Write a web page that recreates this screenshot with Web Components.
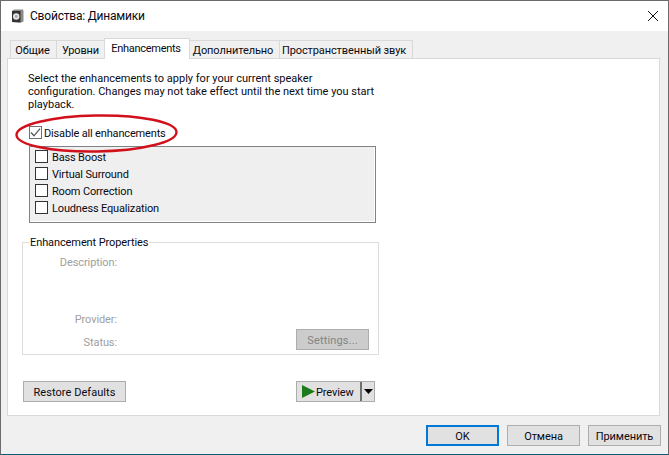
<!DOCTYPE html>
<html>
<head>
<meta charset="utf-8">
<title>Свойства: Динамики</title>
<style>
html,body{margin:0;padding:0;background:#f0f0f0;}
body{font:11px Roboto,sans-serif;color:#000;}
</style>
</head>
<body>
<sound-dialog>
	<title-bar slot="title">Свойства: Динамики</title-bar>
	<tab-strip slot="tabs">
		<tab-item style="width:47px;padding-right:2px">Общие</tab-item>
		<tab-item style="width:49px">Уровни</tab-item>
		<tab-item active style="width:86px;padding-right:2px;letter-spacing:-0.3px">Enhancements</tab-item>
		<tab-item style="width:91px;padding-right:3px">Дополнительно</tab-item>
		<tab-item style="width:134px;padding-right:4px">Пространственный звук</tab-item>
	</tab-strip>
	<enh-panel slot="panel"></enh-panel>
	<win-button slot="footer" default>OK</win-button>
	<win-button slot="footer">Отмена</win-button>
	<win-button slot="footer">Применить</win-button>
</sound-dialog>

<script>
const FONT = `font-family:Roboto,sans-serif;font-size:11px;letter-spacing:-0.1px;color:#0a0a14;`;

class SoundDialog extends HTMLElement{
	constructor(){
		super();
		this.attachShadow({mode:'open'}).innerHTML = `
		<style>
			:host{display:flex;flex-direction:column;box-sizing:border-box;width:669px;height:455px;background:#f0f0f0;
				border:1px solid #6b6b6b;border-bottom-color:#0d5a78;${FONT}}
			.tabs{display:block;height:27px;padding-left:9px;}
			.panel{display:block;margin-left:6px;}
			.footer{display:flex;justify-content:flex-end;gap:8px;margin:9px 7px 0 0;}
		</style>
		<slot name="title"></slot>
		<div class="tabs"><slot name="tabs"></slot></div>
		<div class="panel"><slot name="panel"></slot></div>
		<div class="footer"><slot name="footer"></slot></div>`;
	}
}

class TitleBar extends HTMLElement{
	constructor(){
		super();
		this.attachShadow({mode:'open'}).innerHTML = `
		<style>
			:host{display:flex;align-items:center;height:30px;background:#fff;flex:none;}
			svg.icon{margin-left:10px;width:13px;height:14px;flex:none;}
			span{margin-left:6px;font-size:12px;letter-spacing:-0.2px;flex:1;}
			svg.close{width:10px;height:10px;margin-right:10px;flex:none;}
		</style>
		<svg class="icon" viewBox="0 0 13 14">
			<path d="M1 2 3 0.5 12 0.5 12.5 2 12.5 12.5 10 13.5 1 13Z" fill="#8a8a8a"/>
			<path d="M1 2 9.5 2 9.5 13.5 1 13Z" fill="#333"/>
			<circle cx="5.2" cy="7.5" r="3.2" fill="#e4e4e4"/>
			<circle cx="5.2" cy="7.5" r="1.4" fill="#a8a8a8"/>
		</svg>
		<span><slot></slot></span>
		<svg class="close" viewBox="0 0 10 10"><path d="M0 0 10 10M10 0 0 10" stroke="#111" stroke-width="1" fill="none"/></svg>`;
	}
}

class TabStrip extends HTMLElement{
	constructor(){
		super();
		this.attachShadow({mode:'open'}).innerHTML = `
		<style>:host{display:flex;align-items:flex-end;height:27px;}</style>
		<slot></slot>`;
	}
}

class TabItem extends HTMLElement{
	constructor(){
		super();
		this.attachShadow({mode:'open'}).innerHTML = `
		<style>
			:host{display:flex;align-items:center;justify-content:center;box-sizing:border-box;height:18px;flex:none;padding-top:2px;
				background:#f0f0f0;border:1px solid #d9d9d9;border-bottom:0;margin-right:-1px;white-space:nowrap;}
			:host([active]){height:21px;background:#fff;margin-bottom:-1px;position:relative;z-index:1;padding-top:0;padding-bottom:1px;}
		</style>
		<slot></slot>`;
	}
}

class CheckBox extends HTMLElement{
	constructor(){
		super();
		this.attachShadow({mode:'open'}).innerHTML = `
		<style>
			:host{display:flex;align-items:center;height:13px;white-space:nowrap;letter-spacing:-0.16px;}
			.box{box-sizing:border-box;width:13px;height:13px;background:#fff;border:1px solid #333;flex:none;margin-right:4px;}
			.box svg{display:none;width:11px;height:11px;}
			.label{margin-top:2px;}
			:host([checked]) .box{border-color:#707070;margin-right:2px;}
			:host([checked]) .box svg{display:block;}
		</style>
		<div class="box"><svg viewBox="0 0 11 11"><path d="M1 5.5 4 8.8 10 1.6" stroke="#555" stroke-width="1.3" fill="none"/></svg></div>
		<span class="label"><slot></slot></span>`;
	}
}

class WinButton extends HTMLElement{
	constructor(){
		super();
		this.attachShadow({mode:'open'}).innerHTML = `
		<style>
			:host{display:flex;align-items:center;justify-content:center;box-sizing:border-box;width:73px;height:21px;padding-top:2px;
				background:#e1e1e1;border:1px solid #adadad;white-space:nowrap;flex:none;}
			:host([default]){border:2px solid #0078d7;}
			:host([disabled]){background:#cccccc;color:#848484;letter-spacing:0.15px;}
		</style>
		<slot></slot>`;
	}
}

class SplitButton extends HTMLElement{
	constructor(){
		super();
		this.attachShadow({mode:'open'}).innerHTML = `
		<style>
			:host{display:flex;align-items:center;box-sizing:border-box;width:79px;height:21px;background:#e1e1e1;
				border:1px solid #adadad;white-space:nowrap;flex:none;}
			.play{width:13px;height:13px;margin:0 1px 0 5px;flex:none;}
			.text{width:44px;flex:none;margin-top:2px;}
			.sep{width:2px;height:19px;background:#707070;flex:none;}
			.arrow{width:9px;height:5px;margin-left:2px;flex:none;}
		</style>
		<svg class="play" viewBox="0 0 13 13"><path d="M0 0 13 6.5 0 13Z" fill="#1d7a1d"/></svg>
		<span class="text"><slot></slot></span>
		<div class="sep"></div>
		<svg class="arrow" viewBox="0 0 9 5"><path d="M0 0H9L4.5 5Z" fill="#000"/></svg>`;
	}
}

class EnhList extends HTMLElement{
	constructor(){
		super();
		this.attachShadow({mode:'open'}).innerHTML = `
		<style>
			:host{display:flex;flex-direction:column;gap:4px;box-sizing:border-box;width:347px;height:77px;
				margin:7px 0 0 21px;padding:3px 0 0 5px;background:#efefef;border:1px solid #7f8388;
				box-shadow:inset -1px -1px 0 #fff;}
		</style>
		<slot></slot>`;
	}
}

class PropsGroup extends HTMLElement{
	constructor(){
		super();
		this.attachShadow({mode:'open'}).innerHTML = `
		<style>
			:host{display:block;width:357px;margin:12px 0 0 14px;color:#a0a0a0;}
			fieldset{box-sizing:border-box;height:120px;margin:0;padding:0;border:1px solid #dcdcdc;}
			legend{margin-left:6px;padding:0 1px;color:#0a0a14;line-height:14px;}
			legend span{position:relative;top:1px;}
			.row{display:flex;line-height:14px;}
			.row b{font-weight:normal;width:94px;text-align:right;}
			.desc{margin-top:7px;}
			.prov{margin-top:43px;}
			.stat{height:21px;margin-top:2px;padding-right:9px;justify-content:space-between;align-items:flex-end;}
		</style>
		<fieldset>
			<legend><span>Enhancement Properties</span></legend>
			<div class="row desc"><b>Description:</b></div>
			<div class="row prov"><b>Provider:</b></div>
			<div class="row stat"><b>Status:</b><win-button disabled>Settings...</win-button></div>
		</fieldset>`;
	}
}

class EnhPanel extends HTMLElement{
	constructor(){
		super();
		this.attachShadow({mode:'open'}).innerHTML = `
		<style>
			:host{display:block;box-sizing:border-box;width:653px;height:358px;background:#fff;border:1px solid #d9d9d9;position:relative;}
			p{margin:13px 0 0 20px;width:350px;line-height:13px;letter-spacing:0;}
			.all{margin:15px 0 0 21px;}
			.actions{display:flex;margin:26px 0 0 15px;}
			.restore{width:103px;margin-right:170px;letter-spacing:0.05px;}
			.ring{position:absolute;left:7px;top:55px;pointer-events:none;}
		</style>
		<p>Select the enhancements to apply for your current speaker<br>configuration. Changes may not take effect until the next time you start<br>playback.</p>
		<check-box class="all" checked>Disable all enhancements</check-box>
		<enh-list>
			<check-box>Bass Boost</check-box>
			<check-box>Virtual Surround</check-box>
			<check-box>Room Correction</check-box>
			<check-box>Loudness Equalization</check-box>
		</enh-list>
		<props-group></props-group>
		<div class="actions">
			<win-button class="restore">Restore Defaults</win-button>
			<split-button>Preview</split-button>
		</div>
		<svg class="ring" width="165" height="42" viewBox="0 0 165 42">
			<ellipse cx="81.5" cy="19.5" rx="80" ry="18" transform="rotate(-1 81.5 19.5)" fill="none" stroke="#d2101c" stroke-width="2.4"/>
		</svg>`;
	}
}

customElements.define('check-box', CheckBox);
customElements.define('win-button', WinButton);
customElements.define('split-button', SplitButton);
customElements.define('enh-list', EnhList);
customElements.define('props-group', PropsGroup);
customElements.define('enh-panel', EnhPanel);
customElements.define('tab-item', TabItem);
customElements.define('tab-strip', TabStrip);
customElements.define('title-bar', TitleBar);
customElements.define('sound-dialog', SoundDialog);
</script>
</body>
</html>
